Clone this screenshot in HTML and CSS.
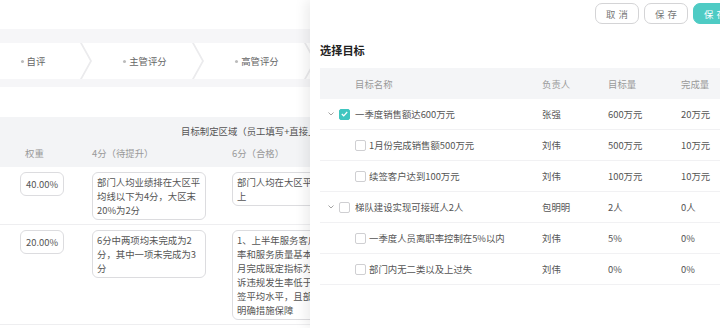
FILE: index.html
```html
<!DOCTYPE html>
<html lang="zh-CN">
<head>
    <meta charset="UTF-8">
    <meta name="viewport" content="width=device-width, initial-scale=1.0">
    <title>绩效目标制定</title>
    <link rel="stylesheet" href="styles.css">
</head>
<body>
    <main class="page">
        <div class="page-top"></div>

        <section class="steps-band">
            <div class="steps">
                <div class="step"><span class="dot"></span>自评</div>
                <div class="step"><span class="dot"></span>主管评分</div>
                <div class="step"><span class="dot"></span>高管评分</div>
                <div class="step"><span class="dot"></span>结果确认</div>
            </div>
        </section>

        <section class="goal-table">
            <div class="goal-head">
                <div class="goal-title">目标制定区域（员工填写+直接上级确认）</div>
                <div class="goal-cols">
                    <span class="head-weight">权重</span>
                    <span>4分（待提升）</span>
                    <span>6分（合格）</span>
                </div>
            </div>

            <div class="goal-row">
                <div><div class="box box-weight">40.00%</div></div>
                <div><div class="box">部门人均业绩排在大区平均线以下为4分，大区末20%为2分</div></div>
                <div><div class="box">部门人均在大区平均线以上</div></div>
            </div>

            <div class="goal-row">
                <div><div class="box box-weight">20.00%</div></div>
                <div><div class="box">6分中两项均未完成为2分，其中一项未完成为3分</div></div>
                <div><div class="box">1、上半年服务客户满意率和服务质量基本达标，月完成既定指标为合格；诉违规发生率低于大区续签平均水平，且部门内有明确措施保障</div></div>
            </div>
        </section>
    </main>

    <aside class="drawer">
        <div class="drawer-bar">
            <button class="btn">取消</button>
            <button class="btn">保存</button>
            <button class="btn btn-primary">保存</button>
        </div>

        <h3 class="drawer-title">选择目标</h3>

        <div class="pick-table">
            <div class="pick-head">
                <span class="name-col">目标名称</span>
                <span>负责人</span>
                <span>目标量</span>
                <span>完成量</span>
            </div>

            <div class="pick-row">
                <span class="name-col parent">
                    <svg class="arrow" width="6" height="4" viewBox="0 0 6 4"><path d="M0.5 0.5 L3 3 L5.5 0.5" fill="none" stroke="#999" stroke-width="0.9"/></svg>
                    <span class="check checked"><svg width="7" height="6" viewBox="0 0 7 6"><path d="M0.8 3 L2.7 4.8 L6.2 1" fill="none" stroke="#fff" stroke-width="1.2"/></svg></span>
                    一季度销售额达600万元
                </span>
                <span>张强</span>
                <span>600万元</span>
                <span>20万元</span>
            </div>
            <div class="pick-row">
                <span class="name-col child"><span class="check"></span>1月份完成销售额500万元</span>
                <span>刘伟</span>
                <span>500万元</span>
                <span>10万元</span>
            </div>
            <div class="pick-row">
                <span class="name-col child"><span class="check"></span>续签客户达到100万元</span>
                <span>刘伟</span>
                <span>100万元</span>
                <span>10万元</span>
            </div>
            <div class="pick-row">
                <span class="name-col parent">
                    <svg class="arrow" width="6" height="4" viewBox="0 0 6 4"><path d="M0.5 0.5 L3 3 L5.5 0.5" fill="none" stroke="#999" stroke-width="0.9"/></svg>
                    <span class="check"></span>
                    梯队建设实现可接班人2人
                </span>
                <span>包明明</span>
                <span>2人</span>
                <span>0人</span>
            </div>
            <div class="pick-row">
                <span class="name-col child"><span class="check"></span>一季度人员离职率控制在5%以内</span>
                <span>刘伟</span>
                <span>5%</span>
                <span>0%</span>
            </div>
            <div class="pick-row">
                <span class="name-col child"><span class="check"></span>部门内无二类以及上过失</span>
                <span>刘伟</span>
                <span>0%</span>
                <span>0%</span>
            </div>
        </div>
    </aside>
</body>
</html>
```

FILE: styles.css
```css
* {
    margin: 0;
    padding: 0;
    box-sizing: border-box;
    font-family: "Noto Sans CJK SC", "Noto Sans", sans-serif;
}

body {
    position: relative;
    width: 720px;
    height: 328px;
    overflow: hidden;
    background-color: #fff;
    color: #555;
    font-size: 9.4px;
}

.page-top {
    height: 29px;
}

/* pasek kroków */
.steps-band {
    background-color: #f6f6f8;
    padding: 14px 0 8px;
    margin-bottom: 30px;
}

.steps {
    display: flex;
    height: 36px;
    margin-left: -30px;
    background-color: #ebebed;
}

.step {
    flex: 0 0 121px;
    margin-left: -9px;
    padding-left: 5px;
    display: flex;
    align-items: center;
    justify-content: center;
    background-color: #fff;
    color: #666;
    clip-path: polygon(0 0, 110px 0, 120px 50%, 110px 100%, 0 100%, 10px 50%);
}

.step:first-child {
    margin-left: 0;
}

.dot {
    width: 3px;
    height: 3px;
    border-radius: 50%;
    background-color: #bbb;
    margin-right: 3px;
}

/* tabela celów */
.goal-head {
    background-color: #f3f4f6;
    height: 50px;
    padding-top: 7px;
}

.goal-title {
    line-height: 14px;
    padding-left: 181px;
    color: #555;
}

.goal-cols {
    display: grid;
    grid-template-columns: 72px 140px 140px;
    padding-left: 20px;
    margin-top: 8px;
    line-height: 14px;
    color: #999;
}

.head-weight {
    padding-left: 5px;
}

.goal-row {
    display: grid;
    grid-template-columns: 72px 140px 140px;
    align-items: start;
    padding: 5px 0 4px 20px;
    border-bottom: 1px solid #eeeef0;
}

.box {
    width: 114px;
    padding: 2px 4px;
    border: 1px solid #dcdcdf;
    border-radius: 6px;
    line-height: 14px;
    color: #555;
}

.box-weight {
    width: 44px;
    padding: 4px 0;
    text-align: center;
}

/* panel boczny */
.drawer {
    position: absolute;
    top: 0;
    right: 0;
    width: 410px;
    height: 328px;
    padding-left: 10px;
    background-color: #fff;
    box-shadow: -4px 0 12px rgba(0, 0, 0, 0.08);
    overflow: hidden;
}

.drawer-bar {
    display: flex;
    justify-content: flex-end;
    gap: 5px;
    padding-top: 3px;
    margin-right: -17px;
}

.btn {
    width: 44px;
    height: 21px;
    border: 1px solid #d4d4d6;
    border-radius: 7px;
    background-color: #fff;
    color: #777;
    font-size: 9.4px;
    letter-spacing: 3px;
    padding-left: 3px;
}

.btn-primary {
    background-color: #4ecbc4;
    border-color: #4ecbc4;
    color: #fff;
}

.drawer-title {
    margin: 18px 0 10px;
    font-size: 11.2px;
    line-height: 16px;
    font-weight: bold;
    color: #222;
}

.pick-table {
    width: 420px;
}

.pick-head,
.pick-row {
    display: grid;
    grid-template-columns: 222px 66px 73px 1fr;
    align-items: center;
    height: 31px;
}

.pick-head {
    background-color: #f4f5f7;
    color: #999;
}

.pick-row {
    border-bottom: 1px solid #f1f1f3;
    color: #555;
}

.name-col {
    display: flex;
    align-items: center;
    padding-left: 35px;
}

.name-col.parent {
    padding-left: 8px;
}

.arrow {
    margin-right: 5px;
}

.check {
    width: 11px;
    height: 11px;
    border: 1px solid #cfcfd2;
    border-radius: 2px;
    margin-right: 5px;
    display: flex;
    align-items: center;
    justify-content: center;
}

.name-col.child .check {
    margin-right: 3px;
}

.check.checked {
    background-color: #3fc6c0;
    border-color: #3fc6c0;
}
```
